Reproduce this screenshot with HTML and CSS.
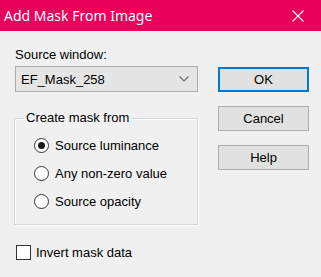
FILE: index.html
```html
<!DOCTYPE html>
<html lang="en">
<head>
    <meta charset="UTF-8">
    <title>Add Mask From Image</title>
    <link rel="stylesheet" href="styles.css">
</head>
<body>
    <div class="titlebar">
        <span class="title">Add Mask From Image</span>
        <span class="close">
            <svg width="12" height="12" viewBox="0 0 12 12"><path d="M0.5 0.5 L11.5 11.5 M11.5 0.5 L0.5 11.5" stroke="#fff" stroke-width="1.1" fill="none"/></svg>
        </span>
    </div>

    <div class="content">
        <div class="left">
            <div class="label">Source window:</div>
            <div class="combo">
                <span>EF_Mask_258</span>
                <svg width="10" height="6" viewBox="0 0 10 6"><path d="M0.5 0.5 L5 5 L9.5 0.5" stroke="#707070" stroke-width="1.2" fill="none"/></svg>
            </div>

            <fieldset class="group">
                <legend>Create mask from</legend>
                <div class="option"><span class="radio checked"></span>Source luminance</div>
                <div class="option"><span class="radio"></span>Any non-zero value</div>
                <div class="option"><span class="radio"></span>Source opacity</div>
            </fieldset>

            <div class="check-row"><span class="checkbox"></span>Invert mask data</div>
        </div>

        <div class="buttons">
            <div class="btn default">OK</div>
            <div class="btn">Cancel</div>
            <div class="btn">Help</div>
        </div>
    </div>
</body>
</html>
```

FILE: styles.css
```css
body {
    margin: 0;
    width: 321px;
    height: 277px;
    background: #f0f0f0;
    font-family: 'Liberation Sans', Arial, sans-serif;
    font-size: 13px;
    color: #000;
    overflow: hidden;
}
.titlebar {
    height: 31px;
    background: #e8005a;
    display: flex;
    align-items: center;
    padding-left: 4px;
}
.title {
    color: #fff;
    font-family: 'Noto Sans', 'Open Sans', sans-serif;
    font-size: 14px;
}
.close {
    margin-left: auto;
    width: 46px;
    height: 31px;
    display: flex;
    align-items: center;
    justify-content: center;
}
.content {
    display: flex;
    gap: 20px;
    padding-left: 15px;
}
.left {
    width: 183px;
}
.label {
    margin-top: 16px;
    line-height: 16px;
    height: 16px;
}
.combo {
    margin-top: 3px;
    height: 24px;
    border: 1px solid #adadad;
    background: #e5e5e5;
    display: flex;
    align-items: center;
    justify-content: space-between;
    padding: 0 8px 0 5px;
}
.group {
    margin: 18px 0 0 -1px;
    padding: 5px 0 9px 0;
    border: 1px solid #d5d5d5;
    box-shadow: 1px 1px 0 #fff, inset 1px 1px 0 #fff;
}
.group legend {
    padding: 0 2px;
    margin-left: 9px;
    line-height: 16px;
}
.option {
    display: flex;
    align-items: center;
    height: 28px;
    padding-left: 19px;
}
.radio {
    width: 13px;
    height: 13px;
    border: 1px solid #333;
    border-radius: 50%;
    background: #fff;
    margin-right: 6px;
    display: flex;
    align-items: center;
    justify-content: center;
}
.radio.checked::after {
    content: "";
    width: 7px;
    height: 7px;
    border-radius: 50%;
    background: #1a1a1a;
}
.check-row {
    display: flex;
    align-items: center;
    height: 24px;
    margin-top: 15px;
    padding-left: 1px;
}
.checkbox {
    width: 13px;
    height: 13px;
    border: 1px solid #333;
    background: #fff;
    margin-right: 5px;
}
.buttons {
    display: flex;
    flex-direction: column;
    gap: 14px;
    padding-top: 36px;
    width: 91px;
}
.btn {
    height: 23px;
    border: 1px solid #adadad;
    background: #e1e1e1;
    display: flex;
    align-items: center;
    justify-content: center;
}
.btn.default {
    height: 21px;
    border: 2px solid #0078d7;
}
```
